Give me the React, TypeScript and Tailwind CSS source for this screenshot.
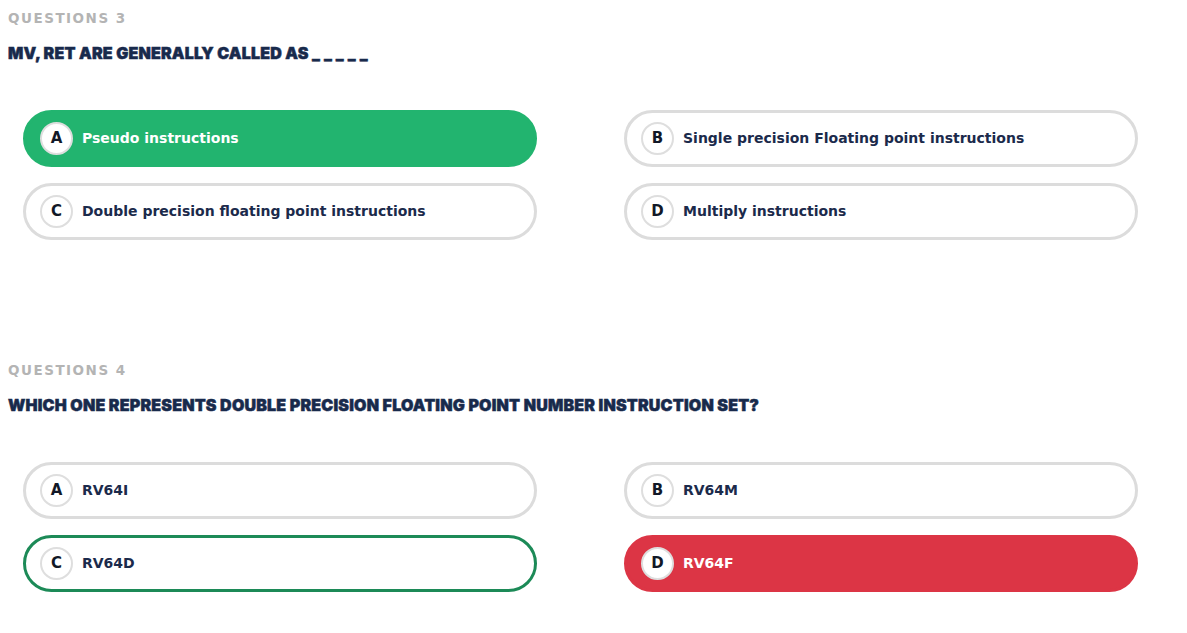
import React from 'react';

type Opt = { key: string; text: string; state?: 'correct' | 'wrong' | 'answer' };

interface Question {
  no: number;
  title: string;
  blank?: boolean;
  options: Opt[];
}

const questions: Question[] = [
  {
    no: 3,
    title: 'MV, RET ARE GENERALLY CALLED AS ',
    blank: true,
    options: [
      { key: 'A', text: 'Pseudo instructions', state: 'correct' },
      { key: 'B', text: 'Single precision Floating point instructions' },
      { key: 'C', text: 'Double precision floating point instructions' },
      { key: 'D', text: 'Multiply instructions' },
    ],
  },
  {
    no: 4,
    title: 'WHICH ONE REPRESENTS DOUBLE PRECISION FLOATING POINT NUMBER INSTRUCTION SET?',
    options: [
      { key: 'A', text: 'RV64I' },
      { key: 'B', text: 'RV64M' },
      { key: 'C', text: 'RV64D', state: 'answer' },
      { key: 'D', text: 'RV64F', state: 'wrong' },
    ],
  },
];

function Option({ opt }: { opt: Opt }) {
  let box = 'border-[3px] border-[#dcdcdc] bg-white text-[#1b2a4b]';
  if (opt.state === 'correct') box = 'border-[3px] border-[#22b46f] bg-[#22b46f] text-white';
  if (opt.state === 'wrong') box = 'border-[3px] border-[#dc3545] bg-[#dc3545] text-white';
  if (opt.state === 'answer') box = 'border-[3px] border-[#1c8a57] bg-white text-[#1b2a4b]';

  return (
    <div className={`${box} h-[57px] rounded-full flex items-center pl-[14px]`}>
      <div className="w-[33px] h-[33px] rounded-full border-2 border-[#dedede] bg-white flex items-center justify-center text-[15px] font-bold text-[#111827]">
        {opt.key}
      </div>
      <span className="ml-[9px] text-[14px] font-bold">{opt.text}</span>
    </div>
  );
}

export default function App() {
  return (
    <div
      className="bg-white pt-[10px] pl-[8px] flex flex-col gap-[122px]"
      style={{ fontFamily: '"DejaVu Sans", sans-serif' }}
    >
      {questions.map((q) => (
        <div key={q.no}>
          {/* Header */}
          <div className="text-[13.5px] font-bold tracking-[1.5px] text-[#b4b4b4] leading-[16px]">
            QUESTIONS {q.no}
          </div>
          <h2
            className="mt-[18px] text-[16px] font-black text-[#182a4c] leading-[18px] tracking-[0.2px] whitespace-pre [-webkit-text-stroke:0.5px_#182a4c]"
            style={{ fontFamily: 'Inter, sans-serif' }}
          >
            {q.title}
            {q.blank && <span className="tracking-[4px]">_____</span>}
          </h2>

          {/* Options */}
          <div className="mt-[48px] ml-[15px] grid grid-cols-[514px_514px] gap-x-[87px] gap-y-[16px]">
            {q.options.map((o) => (
              <Option key={o.key} opt={o} />
            ))}
          </div>
        </div>
      ))}
    </div>
  );
}
